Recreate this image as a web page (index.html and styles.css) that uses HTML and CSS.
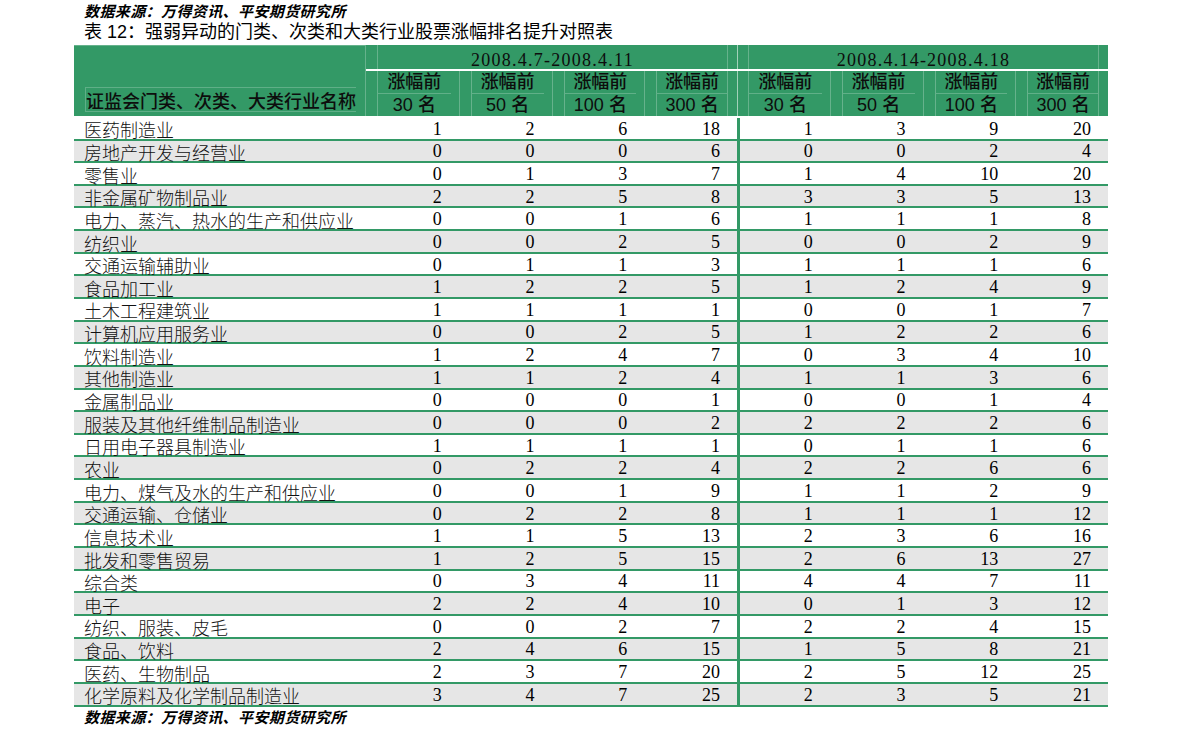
FILE: index.html
```html
<!DOCTYPE html>
<html lang="zh-CN">
<head>
<meta charset="utf-8">
<title>强弱异动的门类、次类和大类行业股票涨幅排名提升对照表</title>
<link rel="stylesheet" href="styles.css">
</head>
<body>
<div class="page">
  <div class="src">数据来源：万得资讯、平安期货研究所</div>
  <div class="title">表 12：强弱异动的门类、次类和大类行业股票涨幅排名提升对照表</div>
  <div class="table">
    <div class="head">
      <div class="lab"><span>证监会门类、次类、大类行业名称</span></div>
      <div class="date g1"><div class="in">2008.4.7-2008.4.11</div></div>
      <div class="date g2"><div class="in">2008.4.14-2008.4.18</div></div>
      <div class="wline"></div>
      <div class="sub rb first"><div class="in">涨幅前</div></div>
      <div class="sub rb"><div class="in">涨幅前</div></div>
      <div class="sub rb"><div class="in">涨幅前</div></div>
      <div class="sub rb last"><div class="in">涨幅前</div></div>
      <div class="sub rb gs first"><div class="in">涨幅前</div></div>
      <div class="sub rb"><div class="in">涨幅前</div></div>
      <div class="sub rb"><div class="in">涨幅前</div></div>
      <div class="sub rb last"><div class="in">涨幅前</div></div>
      <div class="sub rc first"><div class="in">30 名</div></div>
      <div class="sub rc"><div class="in">50 名</div></div>
      <div class="sub rc"><div class="in">100 名</div></div>
      <div class="sub rc last"><div class="in">300 名</div></div>
      <div class="sub rc gs first"><div class="in">30 名</div></div>
      <div class="sub rc"><div class="in">50 名</div></div>
      <div class="sub rc"><div class="in">100 名</div></div>
      <div class="sub rc last"><div class="in">300 名</div></div>
    </div>
    <div class="body">
      <div class="row"><div class="name">医药制造业</div><div class="n">1</div><div class="n">2</div><div class="n">6</div><div class="n">18</div><div class="n g2">1</div><div class="n">3</div><div class="n">9</div><div class="n">20</div></div>
      <div class="row"><div class="name">房地产开发与经营业</div><div class="n">0</div><div class="n">0</div><div class="n">0</div><div class="n">6</div><div class="n g2">0</div><div class="n">0</div><div class="n">2</div><div class="n">4</div></div>
      <div class="row"><div class="name">零售业</div><div class="n">0</div><div class="n">1</div><div class="n">3</div><div class="n">7</div><div class="n g2">1</div><div class="n">4</div><div class="n">10</div><div class="n">20</div></div>
      <div class="row"><div class="name">非金属矿物制品业</div><div class="n">2</div><div class="n">2</div><div class="n">5</div><div class="n">8</div><div class="n g2">3</div><div class="n">3</div><div class="n">5</div><div class="n">13</div></div>
      <div class="row"><div class="name">电力、蒸汽、热水的生产和供应业</div><div class="n">0</div><div class="n">0</div><div class="n">1</div><div class="n">6</div><div class="n g2">1</div><div class="n">1</div><div class="n">1</div><div class="n">8</div></div>
      <div class="row"><div class="name">纺织业</div><div class="n">0</div><div class="n">0</div><div class="n">2</div><div class="n">5</div><div class="n g2">0</div><div class="n">0</div><div class="n">2</div><div class="n">9</div></div>
      <div class="row"><div class="name">交通运输辅助业</div><div class="n">0</div><div class="n">1</div><div class="n">1</div><div class="n">3</div><div class="n g2">1</div><div class="n">1</div><div class="n">1</div><div class="n">6</div></div>
      <div class="row"><div class="name">食品加工业</div><div class="n">1</div><div class="n">2</div><div class="n">2</div><div class="n">5</div><div class="n g2">1</div><div class="n">2</div><div class="n">4</div><div class="n">9</div></div>
      <div class="row"><div class="name">土木工程建筑业</div><div class="n">1</div><div class="n">1</div><div class="n">1</div><div class="n">1</div><div class="n g2">0</div><div class="n">0</div><div class="n">1</div><div class="n">7</div></div>
      <div class="row"><div class="name">计算机应用服务业</div><div class="n">0</div><div class="n">0</div><div class="n">2</div><div class="n">5</div><div class="n g2">1</div><div class="n">2</div><div class="n">2</div><div class="n">6</div></div>
      <div class="row"><div class="name">饮料制造业</div><div class="n">1</div><div class="n">2</div><div class="n">4</div><div class="n">7</div><div class="n g2">0</div><div class="n">3</div><div class="n">4</div><div class="n">10</div></div>
      <div class="row"><div class="name">其他制造业</div><div class="n">1</div><div class="n">1</div><div class="n">2</div><div class="n">4</div><div class="n g2">1</div><div class="n">1</div><div class="n">3</div><div class="n">6</div></div>
      <div class="row"><div class="name">金属制品业</div><div class="n">0</div><div class="n">0</div><div class="n">0</div><div class="n">1</div><div class="n g2">0</div><div class="n">0</div><div class="n">1</div><div class="n">4</div></div>
      <div class="row"><div class="name">服装及其他纤维制品制造业</div><div class="n">0</div><div class="n">0</div><div class="n">0</div><div class="n">2</div><div class="n g2">2</div><div class="n">2</div><div class="n">2</div><div class="n">6</div></div>
      <div class="row"><div class="name">日用电子器具制造业</div><div class="n">1</div><div class="n">1</div><div class="n">1</div><div class="n">1</div><div class="n g2">0</div><div class="n">1</div><div class="n">1</div><div class="n">6</div></div>
      <div class="row"><div class="name">农业</div><div class="n">0</div><div class="n">2</div><div class="n">2</div><div class="n">4</div><div class="n g2">2</div><div class="n">2</div><div class="n">6</div><div class="n">6</div></div>
      <div class="row"><div class="name">电力、煤气及水的生产和供应业</div><div class="n">0</div><div class="n">0</div><div class="n">1</div><div class="n">9</div><div class="n g2">1</div><div class="n">1</div><div class="n">2</div><div class="n">9</div></div>
      <div class="row"><div class="name">交通运输、仓储业</div><div class="n">0</div><div class="n">2</div><div class="n">2</div><div class="n">8</div><div class="n g2">1</div><div class="n">1</div><div class="n">1</div><div class="n">12</div></div>
      <div class="row"><div class="name">信息技术业</div><div class="n">1</div><div class="n">1</div><div class="n">5</div><div class="n">13</div><div class="n g2">2</div><div class="n">3</div><div class="n">6</div><div class="n">16</div></div>
      <div class="row"><div class="name">批发和零售贸易</div><div class="n">1</div><div class="n">2</div><div class="n">5</div><div class="n">15</div><div class="n g2">2</div><div class="n">6</div><div class="n">13</div><div class="n">27</div></div>
      <div class="row"><div class="name">综合类</div><div class="n">0</div><div class="n">3</div><div class="n">4</div><div class="n">11</div><div class="n g2">4</div><div class="n">4</div><div class="n">7</div><div class="n">11</div></div>
      <div class="row"><div class="name">电子</div><div class="n">2</div><div class="n">2</div><div class="n">4</div><div class="n">10</div><div class="n g2">0</div><div class="n">1</div><div class="n">3</div><div class="n">12</div></div>
      <div class="row"><div class="name">纺织、服装、皮毛</div><div class="n">0</div><div class="n">0</div><div class="n">2</div><div class="n">7</div><div class="n g2">2</div><div class="n">2</div><div class="n">4</div><div class="n">15</div></div>
      <div class="row"><div class="name">食品、饮料</div><div class="n">2</div><div class="n">4</div><div class="n">6</div><div class="n">15</div><div class="n g2">1</div><div class="n">5</div><div class="n">8</div><div class="n">21</div></div>
      <div class="row"><div class="name">医药、生物制品</div><div class="n">2</div><div class="n">3</div><div class="n">7</div><div class="n">20</div><div class="n g2">2</div><div class="n">5</div><div class="n">12</div><div class="n">25</div></div>
      <div class="row"><div class="name">化学原料及化学制品制造业</div><div class="n">3</div><div class="n">4</div><div class="n">7</div><div class="n">25</div><div class="n g2">2</div><div class="n">3</div><div class="n">5</div><div class="n">21</div></div>
    </div>
  </div>
  <div class="src bottom">数据来源：万得资讯、平安期货研究所</div>
</div>
</body>
</html>
```
FILE: styles.css
```css
html, body {
  margin: 0;
  padding: 0;
  background: #ffffff;
}

body {
  font-family: "Noto Sans CJK SC", sans-serif;
  color: #000000;
}

.page {
  padding-left: 74px;
  width: 1034px;
}

.src {
  box-sizing: border-box;
  height: 21px;
  padding: 3px 0 0 10px;
  font-family: "Liberation Sans", "Noto Sans CJK SC", sans-serif;
  font-size: 15px;
  line-height: 18px;
  font-weight: 700;
  font-style: italic;
  letter-spacing: 0.4px;
  white-space: nowrap;
}

.src.bottom {
  height: auto;
  padding-top: 2px;
}

.title {
  margin-top: 1px;
  padding-left: 10px;
  font-family: "Liberation Sans", "Noto Sans CJK SC", sans-serif;
  font-size: 18px;
  line-height: 20px;
  font-weight: 400;
  white-space: nowrap;
}

.table {
  margin-top: 3px;
}

/* ---------- header ---------- */
.head {
  display: grid;
  grid-template-columns: 292px repeat(8, 92.75px);
  grid-template-rows: 24px 2px 23px 22px;
  background: #339966;
  color: #0d0d0d;
}

.lab {
  grid-row: 1 / 5;
  grid-column: 1;
  box-sizing: border-box;
  display: flex;
  align-items: flex-end;
  border-right: 1px solid rgba(255, 255, 255, 0.25);
  box-shadow: inset 0 3px 0 -2px rgba(255, 255, 255, 0.25);
  padding-bottom: 4px;
}

.lab span {
  margin-left: 11px;
  padding-top: 1px;
  border: 1px solid rgba(255, 255, 255, 0.22);
  border-right-width: 0;
  font-size: 18px;
  line-height: 22px;
  font-weight: 500;
  white-space: nowrap;
  width: 270px;
}

.date {
  grid-row: 1;
}

.date.g1 {
  grid-column: 2 / 6;
}

.date.g2 {
  grid-column: 6 / 10;
  border-left: 1px solid rgba(255, 255, 255, 0.55);
}

.date .in {
  box-sizing: border-box;
  height: 100%;
  margin: 0 9px 0 11px;
  border-left: 1px solid rgba(255, 255, 255, 0.25);
  border-right: 1px solid rgba(255, 255, 255, 0.25);
  padding-top: 5px;
  text-align: center;
  font-family: "Liberation Serif", serif;
  font-size: 18px;
  line-height: 20px;
  letter-spacing: 1.25px;
  white-space: nowrap;
}

.date.g2 .in {
  margin-left: 10px;
}

.wline {
  grid-row: 2;
  grid-column: 2 / 10;
  background: #ffffff;
}

.sub {
  box-sizing: border-box;
  border-left: 1px solid rgba(255, 255, 255, 0.25);
}

.sub.first {
  border-left: 0;
}

.sub.gs {
  border-left: 1px solid rgba(255, 255, 255, 0.55);
}

.sub .in {
  box-sizing: border-box;
  height: 100%;
  margin: 0 8px 0 11px;
  border-left: 1px solid rgba(255, 255, 255, 0.25);
  text-align: center;
  font-family: "Liberation Sans", "Noto Sans CJK SC", sans-serif;
  font-size: 18px;
  font-weight: 500;
  white-space: nowrap;
}

.sub.gs .in {
  margin-left: 10px;
}

.sub.last .in {
  margin-right: 9px;
  border-right: 1px solid rgba(255, 255, 255, 0.25);
}

.sub.rb .in {
  line-height: 22px;
  border-bottom: 1px solid rgba(255, 255, 255, 0.22);
}

.sub.rc .in {
  line-height: 22px;
}

/* ---------- body rows ---------- */
.row {
  display: grid;
  grid-template-columns: 292px repeat(8, 92.75px);
  box-sizing: border-box;
  height: 22.65px;
  border-bottom: 2px solid #339966;
  background: #ffffff;
}

.row:first-child {
  height: 24.5px;
  padding-top: 1.85px;
}

.row:nth-child(even) {
  background: #e6e6e6;
}

.name {
  padding-left: 10px;
  padding-top: 1.5px;
  font-family: "Noto Sans CJK SC", sans-serif;
  font-size: 18px;
  font-weight: 300;
  line-height: 20.65px;
  white-space: nowrap;
  color: #111111;
}

.n {
  box-sizing: border-box;
  padding-right: 17px;
  padding-top: 0.8px;
  text-align: right;
  font-family: "Liberation Serif", serif;
  font-size: 18px;
  line-height: 20.65px;
  color: #000000;
}

.n.g2 {
  border-left: 3px solid #339966;
}
```
